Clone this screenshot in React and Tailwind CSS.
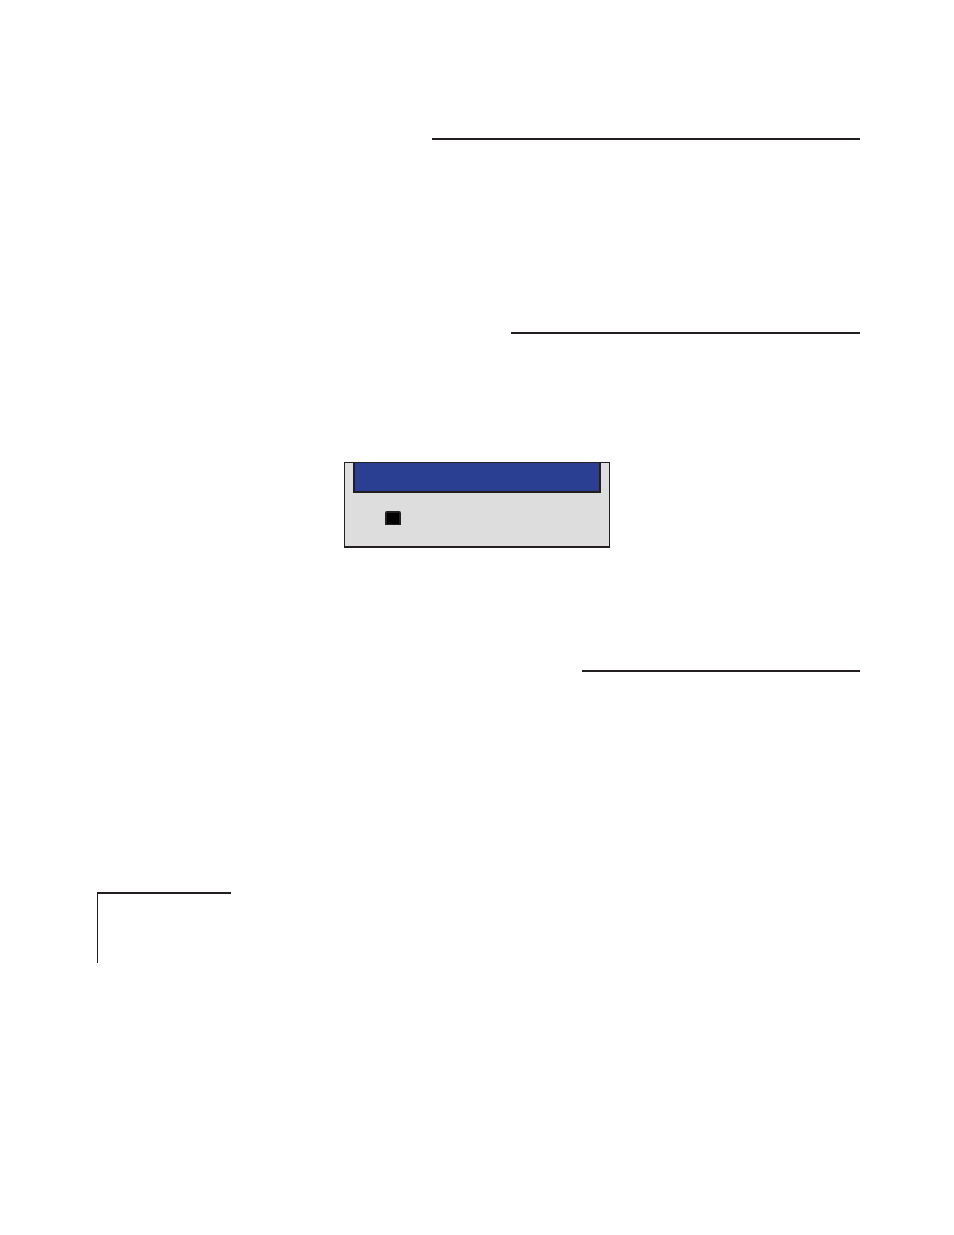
function Rule({ className }) {
  return <hr className={`ml-auto h-[2px] border-0 bg-[#231f20] ${className}`} />
}

function Panel() {
  return (
    <section className="w-[266px] mx-auto mt-32 px-2 border border-b-2 border-[#231f20] bg-[#dddddd]">
      <header className="h-[30px] border-x-2 border-b-2 border-[#231f20] bg-[#2a3f92]" />
      <div className="flex pl-8 pt-[18px] pb-[21px]">
        <input
          type="checkbox"
          aria-label="Option"
          className="appearance-none w-4 h-[14px] rounded-t-[2px] border-2 border-b border-[#231f20] bg-black"
        />
      </div>
    </section>
  )
}

export default function App() {
  return (
    <div className="min-h-screen bg-white pt-[138px]">
      <div className="pr-[94px]">
        <Rule className="w-[428px]" />
        <Rule className="w-[349px] mt-48" />
      </div>

      <Panel />

      <div className="pl-[97px] pr-[94px]">
        <Rule className="w-[278px] mt-[122px]" />
        {/* note corner */}
        <aside className="w-[134px] h-[71px] mt-[220px] border-t-2 border-l border-[#231f20]" />
      </div>
    </div>
  )
}
